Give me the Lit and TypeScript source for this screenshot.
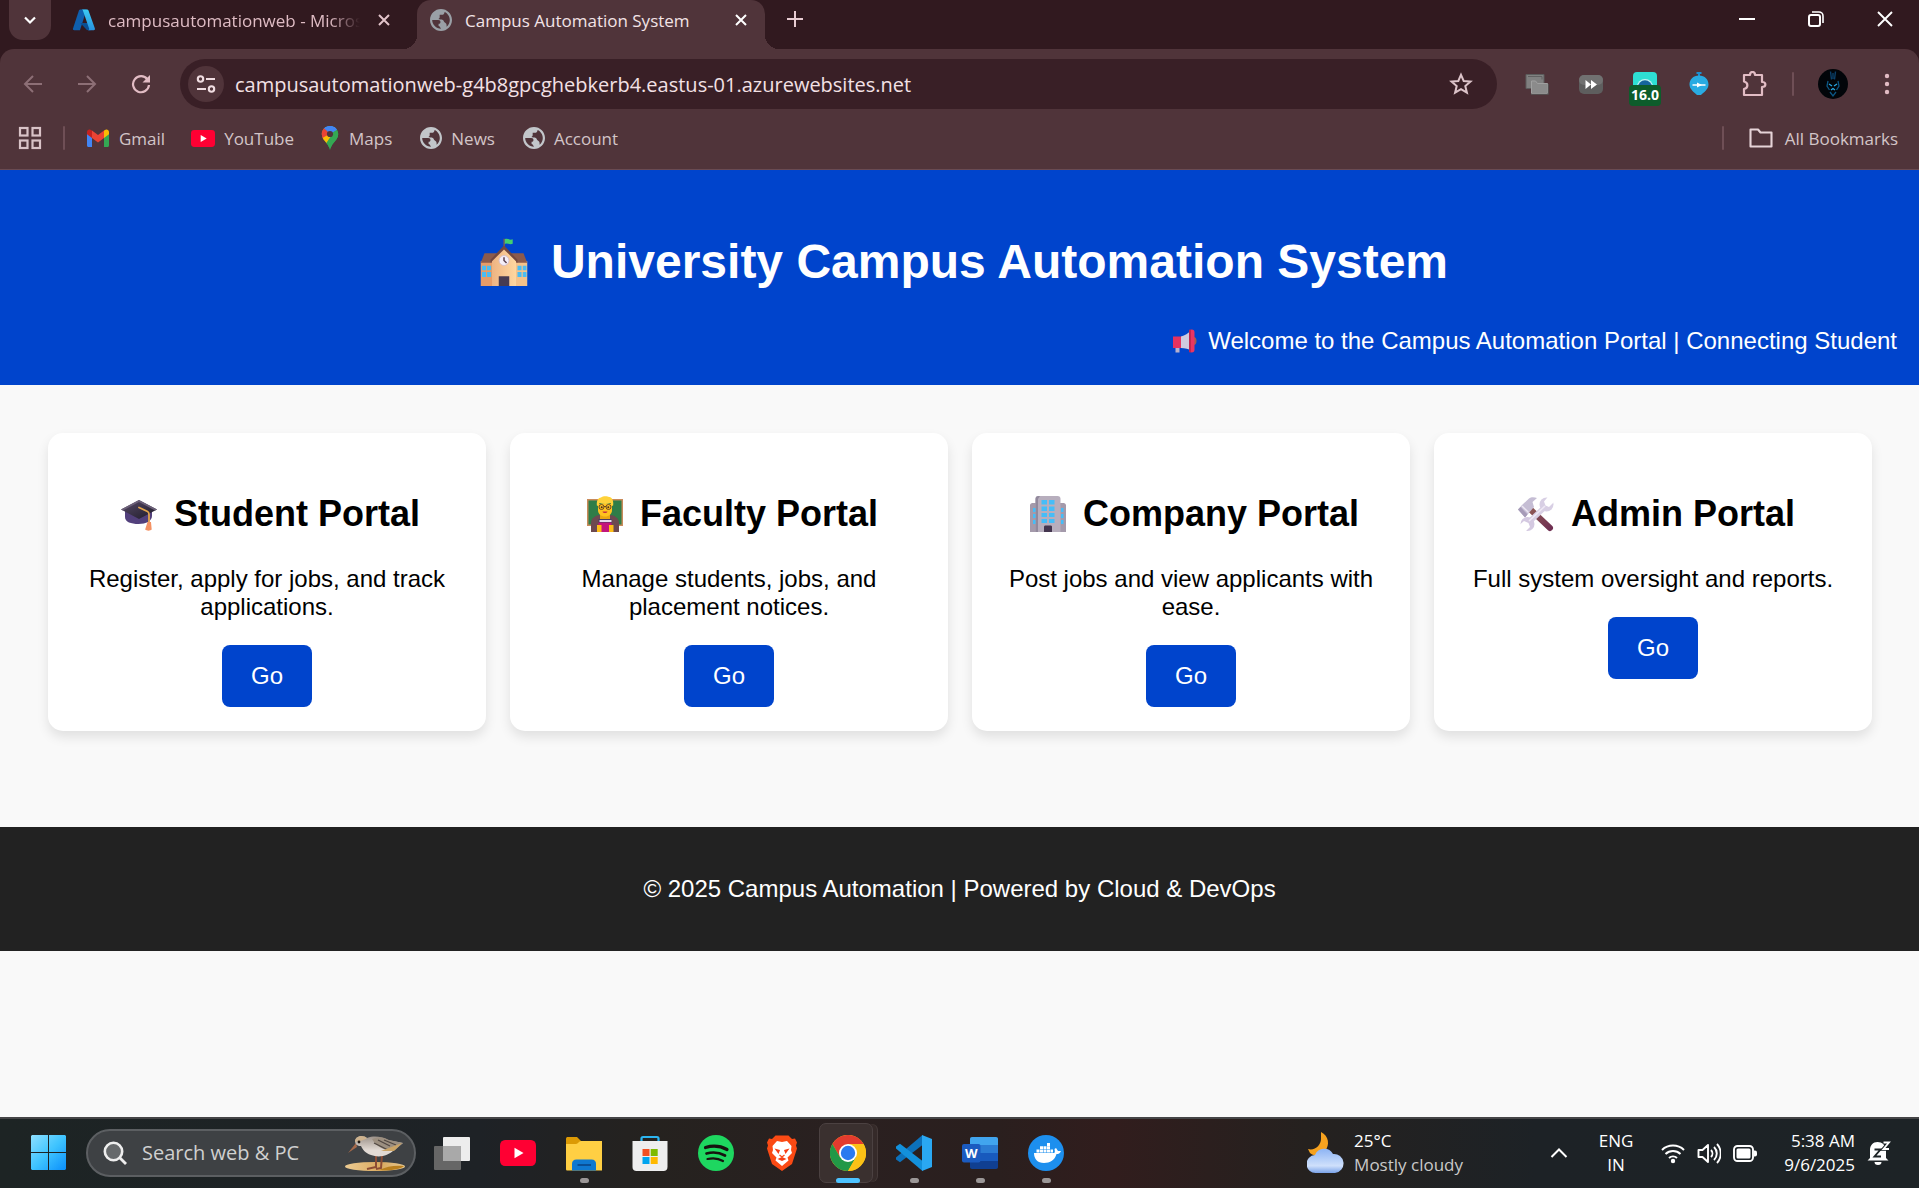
import { LitElement, html, svg, css } from "lit";
import { customElement } from "lit/decorators.js";

const icon = (size: number, box: number, body: unknown) =>
  html`<svg class="icon" width=${size} height=${size} viewBox="0 0 ${box} ${box}" aria-hidden="true">${body}</svg>`;

const globe = (fill: string) =>
  html`<svg class="icon" width="22" height="22" viewBox="2 2 20 20" aria-hidden="true">
    <path fill=${fill} fill-rule="evenodd" d="M12 2C6.480 2 2 6.480 2 12s4.480 10 10 10 10-4.480 10-10S17.520 2 12 2zm0 17.900c-4.300 0-8-3.600-8-7.900h5.500c1.500 0 2 .8 2 1.800 0 1.200-.7 1.700-1.700 1.700v2c.9.3 1.500 1 2.200 2.400zm5-1.700c1.900-1.500 3-3.700 3-6.200 0-3.300-2-6.100-4.700-7.300-.3 1.700-1.100 2.600-2.600 2.600h-1.900v2.200c0 .8-.5 1.300-1.300 1.500 1.300.4 3 .2 4.200 1 .9.600.8 1.700 1.800 2.200 1.300.6 1.900 2 1.500 4z" />
  </svg>`;

const azure = icon(
  24,
  24,
  svg`<defs><linearGradient id="az" x1="0" y1="0" x2="0" y2="1"><stop offset="0" stop-color="#3ccbf4"/><stop offset="1" stop-color="#2892df"/></linearGradient></defs>
  <path d="M8 1.500h6.600L8 22.300H2.200a1.300 1.300 0 0 1-1.200-1.700L7 2.300z" fill="#0f5fae"/>
  <path d="M18 15H8.300l6.600 6.900 3.500.6z" fill="#0a4f94"/>
  <path d="M9.600 1.500h5.600c.5 0 1 .3 1.200.8L22.900 20.600a1.300 1.300 0 0 1-1.200 1.700h-5.800c1 0 1.500-.8 1.200-1.700L10.800 2.300c-.2-.5-.6-.8-1.200-.8z" fill="url(#az)"/>`
);

const closeX = (color: string) =>
  icon(14, 14, svg`<path d="M2 2l10 10M12 2L2 12" stroke=${color} stroke-width="2" fill="none"/>`);

const gmail = icon(
  24,
  24,
  svg`<path d="M1 6v13.500c0 .8.700 1.500 1.500 1.500H6V10z" fill="#4285f4"/><path d="M18 10v11h3.500c.8 0 1.500-.7 1.500-1.500V6z" fill="#34a853"/>
  <path d="M18 4.500V12l5-3.800V6c0-2-2.200-3.200-3.800-2z" fill="#fbbc04"/><path d="M6 12V4.500l6 4.500 6-4.500V12l-6 4.500z" fill="#ea4335"/><path d="M1 6v2.200L6 12V4.500L4.800 4C3.200 2.800 1 4 1 6z" fill="#c5221f"/>`
);

const youtube = (w: number, h: number) =>
  html`<svg class="icon" width=${w} height=${h} viewBox="0 0 36 25" preserveAspectRatio="none" aria-hidden="true">
    <rect width="36" height="25" rx="5" fill="#ff0033" /><path d="M14.500 7.500v10l9-5z" fill="#fff" />
  </svg>`;

const maps = html`<svg class="icon" width="20" height="24" viewBox="2 0 20 24" aria-hidden="true">
  <clipPath id="pin"><path d="M12 0c4.700 0 8.200 3.600 8.200 8 0 6.500-6 7.500-8.200 16C9.800 15.500 3.800 14.500 3.800 8c0-4.400 3.500-8 8.200-8z" /></clipPath>
  <g clip-path="url(#pin)"><path d="M0 0h24v24H0z" fill="#34a853" /><path d="M5 2L12 8 22 2V0H5z" fill="#4285f4" /><path d="M12 8L20 0H6z" fill="#4285f4" /><path d="M5.500 2L12 8 4 16 0 8z" fill="#ea4335" /><path d="M3 13.500L12 5l3 5-8 9z" fill="#fbbc04" /><path d="M12 8L6 2.500 3 6v6.500z" fill="#ea4335" /><path d="M15 7l-8 12 9 5 6-12V3z" fill="#34a853" /><path d="M12 8l7-5-5-3-7 2z" fill="#4285f4" /></g>
  <circle cx="12" cy="8" r="3.100" fill="#50343a" />
</svg>`;

@customElement("browser-chrome")
class BrowserChrome extends LitElement {
  static styles = css`
    :host { display: block; background: #50343a; color: #e3d3d6; font-family: "Open Sans", "Noto Sans", sans-serif; border-bottom: 1px solid #6a4b52; }
    button { font: inherit; color: inherit; background: none; border: 0; padding: 0; display: grid; place-items: center; }
    a { color: inherit; text-decoration: none; }
    svg { display: block; flex: none; }
    .strip { height: 49px; background: #31191f; display: flex; align-items: flex-start; }
    .search-tabs { width: 42px; height: 40px; margin-left: 9px; border-radius: 0 0 14px 14px; background: #50343a; }
    .tab { height: 40px; display: flex; align-items: center; box-sizing: border-box; font-size: 17px; }
    .idle { width: 356px; margin-left: 10px; padding: 0 19px 0 11px; color: #dfbcc4; }
    .idle .label { margin: 0 10px 0 12px; }
    .fade { -webkit-mask-image: linear-gradient(90deg, #000 88%, transparent); }
    .label { flex: 1; overflow: hidden; white-space: nowrap; }
    .tab button { width: 28px; height: 28px; }
    .active { position: relative; width: 348px; height: 49px; padding: 0 10px 9px 13px; background: #50343a; border-radius: 14px 14px 0 0; color: #f3e3e6; }
    .active .label { margin-left: 13px; }
    .active::before, .active::after { content: ""; position: absolute; bottom: 0; width: 14px; height: 14px; }
    .active::before { left: -14px; background: radial-gradient(circle at 0 0, transparent 14px, #50343a 14px); }
    .active::after { right: -14px; background: radial-gradient(circle at 100% 0, transparent 14px, #50343a 14px); }
    .new-tab { width: 60px; height: 38px; }
    .window { display: flex; margin-left: auto; }
    .window button { width: 69px; height: 38px; }
    .corner { background: #31191f; }
    .toolbar { display: flex; align-items: center; height: 70px; padding: 0 5px 0 6px; background: #50343a; border-radius: 14px 14px 0 0; }
    .nav { width: 54px; height: 50px; }
    .address { flex: 1; height: 50px; margin-left: 12px; border-radius: 25px; background: #391f26; display: flex; align-items: center; padding: 0 24px 0 8px; }
    .site { width: 36px; height: 36px; border-radius: 50%; background: #50343a; }
    .url { flex: 1; min-width: 0; border: 0; outline: 0; background: none; color: #f3e1e5; font: inherit; font-size: 20px; padding: 0; margin: 0 12px 0 11px; }
    .tools { display: flex; margin-left: 13px; align-items: center; }
    .tools button { width: 54px; height: 50px; }
    .tools .extensions { width: 56px; }
    .badge-icon { position: relative; }
    .badge { position: absolute; left: 11px; top: 26px; width: 32px; height: 21px; border-radius: 4px; background: #0d5c2b; color: #fff; font-size: 14px; line-height: 20px; font-weight: 700; text-align: center; }
    .rule { width: 2px; height: 24px; border-radius: 1px; background: #6f4f56; }
    .tools .rule { margin: 0 12px 0 10px; }
    .bookmarks { display: flex; align-items: center; height: 38px; padding: 0 21px 12px 18px; font-size: 17px; color: #d3c5c8; }
    .bookmarks a { display: flex; align-items: center; gap: 9px; margin-right: 26px; }
    .bookmarks .spaced { margin-right: 28px; }
    .bookmarks > .rule { margin: 0 21px; }
    .bookmarks .right { display: flex; align-items: center; margin-left: auto; gap: 25px; }
    .bookmarks .right a { margin: 0; gap: 12px; }
  `;
  render() {
    const p = "#e2bcc4";
    return html`
      <div class="strip">
        <button class="search-tabs" aria-label="Search tabs">${icon(14, 14, svg`<path d="M2 4.500l5 5 5-5" fill="none" stroke="#fff" stroke-width="2.200"/>`)}</button>
        <div class="tab idle">${azure}<span class="label fade">campusautomationweb - Micros</span><button aria-label="Close tab">${closeX("#e3c4ca")}</button></div>
        <div class="tab active">${globe("#9aa0a6")}<span class="label">Campus Automation System</span><button aria-label="Close tab">${closeX("#fff")}</button></div>
        <button class="new-tab" aria-label="New tab">${icon(18, 18, svg`<path d="M9 1v16M1 9h16" stroke="#e8ccd2" stroke-width="2"/>`)}</button>
        <div class="window">
          <button aria-label="Minimize">${icon(16, 16, svg`<path d="M0 8h16" stroke="#fff" stroke-width="2"/>`)}</button>
          <button aria-label="Restore">${icon(16, 16, svg`<rect x="1" y="4" width="11" height="11" rx="2" fill="none" stroke="#fff" stroke-width="2"/><path d="M4 1h7a4 4 0 0 1 4 4v7" fill="none" stroke="#fff" stroke-width="1.600"/>`)}</button>
          <button aria-label="Close">${icon(16, 16, svg`<path d="M1 1l14 14M15 1L1 15" stroke="#fff" stroke-width="1.900"/>`)}</button>
        </div>
      </div>
      <div class="corner"><div class="toolbar">
        <button class="nav" aria-label="Back">${icon(20, 20, svg`<path d="M19 10H2M10 2l-8 8 8 8" fill="none" stroke="#8d6f76" stroke-width="2"/>`)}</button>
        <button class="nav" aria-label="Forward">${icon(20, 20, svg`<path d="M1 10h17M10 2l8 8-8 8" fill="none" stroke="#8d6f76" stroke-width="2"/>`)}</button>
        <button class="nav" aria-label="Reload">${icon(20, 20, svg`<path d="M16.500 5.500A8 8 0 1 0 18 11" fill="none" stroke=${p} stroke-width="2.200"/><path d="M19 1v7.500h-7.500z" fill=${p}/>`)}</button>
        <div class="address">
          <button class="site" aria-label="Site information">${icon(20, 20, svg`<g fill="none" stroke="#f0dde1" stroke-width="2.100"><circle cx="4.500" cy="5" r="2.700"/><path d="M10 5h9M1 15h9"/><circle cx="15.500" cy="15" r="2.700"/></g>`)}</button>
          <input class="url" type="text" aria-label="Address" value="campusautomationweb-g4b8gpcghebkerb4.eastus-01.azurewebsites.net" />
          <button aria-label="Bookmark this page">${icon(24, 24, svg`<path d="M12 2.800l2.700 6.200 6.800.6-5.200 4.500 1.600 6.600L12 17.200l-5.900 3.500 1.600-6.600L2.500 9.600l6.800-.6z" fill="none" stroke="#dcc3c9" stroke-width="2"/>`)}</button>
        </div>
        <div class="tools">
          <button aria-label="Windows extension">${icon(24, 24, svg`<path d="M1 2.500h18v14H1z" fill="#808080" stroke="#5c5c5c"/><path d="M3 4.500h14v3" fill="none" stroke="#606060"/><path d="M6.500 9h4l2 2.500h10v10h-16z" fill="#8b8b8b" stroke="#a0a0a0"/><path d="M6 22.300h17.300V12" fill="none" stroke="#555"/>`)}</button>
          <button aria-label="Video speed">${icon(24, 24, svg`<rect x="0" y="3" width="24" height="19" rx="5" fill="#5e5e5e"/><rect x="0" y="3" width="24" height="10" rx="5" fill="#717171"/><path d="M6.500 8v9l5.500-4.500zM12 8v9l6-4.500z" fill="#fff"/>`)}</button>
          <button class="badge-icon" aria-label="Screen recorder">${icon(24, 24, svg`<rect width="24" height="22" rx="4" fill="#2ee0d4"/><circle cx="12" cy="15" r="8" fill="#c9f3f3"/><circle cx="12" cy="15.500" r="7.200" fill="#16659d"/>`)}<span class="badge">16.0</span></button>
          <button aria-label="Timer">${icon(24, 24, svg`<path d="M9.500 1h5M12 1v3" stroke="#1a8fd1" stroke-width="2"/><path d="M12 3.500c6 0 9.500 4 9.500 9 0 5-5 8-7.500 10.500h-4C7.500 20.500 2.500 17.500 2.500 12.500c0-5 3.500-9 9.500-9z" fill="#29abe2"/><path d="M5.500 13h13" stroke="#fff" stroke-width="1.500"/><path d="M10 10.500l5 2.500-5 2.500z" fill="#fff"/>`)}</button>
          <button class="extensions" aria-label="Extensions">${icon(26, 26, svg`<path d="M3 4h6c0-4 5-4 5 0h7v7c4.500 0 4.500 5 0 5v8H3v-6c4.500-1 4.500-6.500 0-7.500z" fill="none" stroke=${p} stroke-width="2.200" stroke-linejoin="round"/>`)}</button>
          <span class="rule"></span>
          <button aria-label="Profile">${icon(30, 30, svg`<circle cx="15" cy="15" r="15" fill="#020509"/><path d="M12.500 2.500l1 8M17.500 2.500l-1 8M15 4v6" stroke="#0b3f68" stroke-width="1.400"/><path d="M10 12l-1 5 2.500 4M20 12l1 5-2.500 4M12 23l3 4 3-4" fill="none" stroke="#0c5684" stroke-width="1.300"/><path d="M11 15l3 2M19 15l-3 2M13 21l2-1.500 2 1.500" stroke="#27a5df" stroke-width="1.400" fill="none"/>`)}</button>
          <button aria-label="Menu">${icon(24, 24, svg`<g fill=${p}><circle cx="12" cy="4" r="2.200"/><circle cx="12" cy="12" r="2.200"/><circle cx="12" cy="20" r="2.200"/></g>`)}</button>
        </div>
      </div></div>
      <nav class="bookmarks">
        <button aria-label="Apps">${icon(24, 24, svg`<g fill="none" stroke="#d9c3c7" stroke-width="2.200"><rect x="2" y="2" width="7.500" height="7.500"/><rect x="14.500" y="2" width="7.500" height="7.500"/><rect x="2" y="14.500" width="7.500" height="7.500"/><rect x="14.500" y="14.500" width="7.500" height="7.500"/></g>`)}</button>
        <span class="rule"></span>
        <a href="#gmail">${gmail}Gmail</a>
        <a href="#youtube">${youtube(24, 17)}YouTube</a>
        <a href="#maps" class="spaced">${maps}Maps</a>
        <a href="#news" class="spaced">${globe("#c2c6ca")}News</a>
        <a href="#account">${globe("#c2c6ca")}Account</a>
        <div class="right"><span class="rule"></span>
          <a href="#all">${icon(24, 24, svg`<path d="M1.500 3.500h7.500l2.500 3h11v14h-21z" fill="none" stroke="#e6d3d7" stroke-width="2.100" stroke-linejoin="round"/>`)}All Bookmarks</a>
        </div>
      </nav>
    `;
  }
}

const school = icon(
  48,
  32,
  svg`<defs><linearGradient id="sw" x1="0" x2="1"><stop stop-color="#eeb483"/><stop offset="1" stop-color="#ffd7a0"/></linearGradient></defs>
  <path d="M15.600.5h1v6h-1z" fill="#7b5955"/><path d="M16.500.8c2-1 3 .9 5.300.1v3c-2 .9-3.500-.9-5.300.2z" fill="#43cf70"/>
  <path d="M.5 15.500h9V32h-9z" fill="#e79c68"/><path d="M22.500 15.500h9V32h-9z" fill="#f5c28a"/>
  <path d="M3 10.200h26l2.500 6.300H.5z" fill="#8b5a4c"/>
  <path d="M16 6l8 8.800V32H8V14.800z" fill="url(#sw)"/><path d="M16 5l9 9.500v2L16 7.600 7 16.500v-2z" fill="#74483f"/>
  <circle cx="16" cy="15" r="3.300" fill="#f4eef8" stroke="#cdb8cd" stroke-width=".500"/><path d="M16 12.800V15l1.700 1.700" stroke="#5c4250" fill="none"/>
  <path d="M12.500 25.500h7V32h-7z" fill="#473b52"/>
  <g fill="#4bbcf3"><path d="M1.300 18.500h2.700v3H1.300zM4.700 18.500h2.700v3H4.700zM1.300 22.700h2.700v3.300H1.300zM4.700 22.700h2.700v3.300H4.700zM25 18.500h2.700v3H25zM28.500 18.500h2.500v3h-2.500zM25 22.700h2.700v3.300H25zM28.500 22.700h2.500v3.300h-2.500z"/></g>`
);

const megaphone = icon(
  26,
  26,
  svg`<ellipse cx="21.500" cy="13" rx="3" ry="4" fill="#a45b4e"/><path d="M3.500 18h4v6.500h-4z" fill="#b8b0cc"/><path d="M1 8.500h9v11.500H1z" fill="#e6325f"/>
  <path d="M9 8.500c4-1 7-3 10-6v20c-2-1.500-6-2.500-10-2.500z" fill="#cfcade"/><rect x="17" y="1.500" width="5.500" height="23" rx="2.700" fill="#e93563"/><rect x="17" y="1.500" width="2" height="23" rx="1" fill="#c22650"/>`
);

const cap = icon(
  36,
  36,
  svg`<defs><linearGradient id="cp" x1="0" x2="1" y2="1"><stop stop-color="#584b68"/><stop offset="1" stop-color="#1d1a28"/></linearGradient></defs>
  <path d="M4 15v6c0 5 6 7 13.500 7S31 25 31 20v-5z" fill="#52407c"/><path d="M18 4l18 9.500L18 23 0 13.500z" fill="url(#cp)"/>
  <path d="M18 4l18 9.500-2 1L18 6 2 14.500l-2-1z" fill="#6c6078"/><path d="M18 11.500l8.500 4c1.300.6 1.500 2 1.500 3v9" fill="none" stroke="#e2a44c" stroke-width="1.800" stroke-linecap="round"/>
  <path d="M26.500 26h3.500l.7 7.500c-1.500 1.500-5 1.500-6.500 0z" fill="#f49163"/>`
);

const teacher = icon(
  36,
  36,
  svg`<path d="M0 3h36v27H0z" fill="#c98b5a"/><path d="M1.500 4.500h33v24h-33z" fill="#2f7d48"/>
  <path d="M4 36v-9c0-5 5-8 9-8h10c4 0 9 3 9 8v9z" fill="#6d4a50"/><path d="M13 17h10v6H13z" fill="#e9a811"/>
  <path d="M11 8h14v6c0 4-3 6.500-7 6.500S11 18 11 14z" fill="#ffc31f"/><path d="M10 10c-1-5 1-8 4-8.500 2-2 7-1.500 8-.500 3 0 5 4 4 9-1.500-.5-2-2-2.500-3-4 1.500-7.500 1-11 0-.5 1.500-1 2.500-2.500 3z" fill="#ffd23a"/>
  <g fill="none" stroke="#6b4722" stroke-width="1"><circle cx="14.500" cy="11" r="2.500"/><circle cx="21.500" cy="11" r="2.500"/><path d="M17 10.500h2"/></g><g fill="#4a2d20"><circle cx="14.700" cy="11.200" r="1"/><circle cx="21.300" cy="11.200" r="1"/></g><path d="M15.500 15.500h5c-.5 2-4.500 2-5 0z" fill="#c5313f"/>
  <path d="M11.500 23h13v4h-13z" fill="#473d63"/><path d="M12.500 24h12v2h-12z" fill="#e6dfed"/><path d="M11.500 26.500h13V36h-13z" fill="#c3167b"/><path d="M10 29h4.500v7H10zM22 29h4.500v7H22z" fill="#ffbd18"/>`
);

const office = icon(
  36,
  36,
  svg`<path d="M0 9.500C0 8 1 7 2.500 7H8v29H0zM28 7h5.500C35 7 36 8 36 9.500V36h-8z" fill="#a49aab"/>
  <path d="M5.500 3c0-2 1-3 3-3h19c2 0 3 1 3 3v33h-25z" fill="#b7aebd"/><path d="M5.500 3c0-2 1-3 3-3H10L8 3v33H5.500z" fill="#92899c"/>
  <g fill="#45bdf8"><path d="M11.500 4h5.500v4.500h-5.500zM19 4h5.500v4.500H19zM11.500 10.500h5.500V15h-5.500zM19 10.500h5.500V15H19zM11.500 17h5.500v4h-5.500zM19 17h5.500v4H19zM11.500 23h5.500v4h-5.500zM19 23h5.500v4H19zM3 12h2.500v4H3zM3 18h2.500v4H3zM3 24h2.500v4H3zM31 12h2.500v4H31zM31 18h2.500v4H31zM31 24h2.500v4H31z"/></g>
  <path d="M14 31c0-1 .5-1.500 1.500-1.500h5c1 0 1.500.5 1.500 1.500v5h-8z" fill="#43354e"/>`
);

const tools = icon(
  36,
  36,
  svg`<defs><linearGradient id="hd" x1="0" y1="0" x2="1" y2="1"><stop stop-color="#8d5654"/><stop offset="1" stop-color="#703052"/></linearGradient></defs>
  <path d="M13 14l19 18" stroke="url(#hd)" stroke-width="6" stroke-linecap="round"/>
  <path d="M0 13.500l4-4.500L11 2.500c2-1.500 5-1.500 8-.5l-4.500 4 1.500 5-6 7-3 3.500z" fill="#c5bdd4"/><path d="M0 13.500l2.500-2.500 7 7.500-2.500 3z" fill="#a69bb8"/><path d="M4 10l6.500 6.500" stroke="#ece6f2" stroke-width="1.500"/>
  <path d="M9 28L29 9" stroke="#d8cfe4" stroke-width="5.500"/>
  <circle cx="28.500" cy="8.500" r="7" fill="#d8cfe4"/><path d="M27.500 9.500l-1.500-4L31.500-1 37 5l-6 6z" fill="#fff"/>
  <circle cx="9.500" cy="28" r="7" fill="#d4c9e1"/><path d="M10.500 27l1.500 4L6 37-1 31l7-6z" fill="#fff"/>
  <path d="M11 25L27 10" stroke="#efe9f5" stroke-width="1.500"/>`
);

const portals = [
  { name: "Student Portal", art: cap, text: "Register, apply for jobs, and track applications." },
  { name: "Faculty Portal", art: teacher, text: "Manage students, jobs, and placement notices." },
  { name: "Company Portal", art: office, text: "Post jobs and view applicants with ease." },
  { name: "Admin Portal", art: tools, text: "Full system oversight and reports." },
];

@customElement("campus-page")
class CampusPage extends LitElement {
  static styles = css`
    :host { display: block; background: #f9f9f9; color: #000; font-family: "Liberation Sans", Arial, sans-serif; font-size: 24px; line-height: 28px; }
    svg { display: block; flex: none; }
    header { background: #0044cc; color: #fff; padding: 60px 22px 30px; }
    h1 { margin: 0; display: flex; justify-content: center; align-items: center; gap: 14px; font-size: 48px; line-height: 64px; }
    .art { display: grid; place-items: center; flex: none; width: 50px; }
    .wide { width: 66px; }
    .small { width: 33px; }
    .ticker { display: flex; justify-content: flex-end; align-items: center; gap: 7px; margin-top: 33px; white-space: nowrap; }
    main { display: grid; grid-template-columns: repeat(4, minmax(0, 1fr)); gap: 24px; padding: 48px 47px 48px 48px; margin-bottom: 48px; }
    .card { background: #fff; border-radius: 15px; padding: 57px 24px 24px; text-align: center; box-shadow: 0 6px 12px rgba(0, 0, 0, 0.1); }
    h2 { margin: 0; display: flex; justify-content: center; align-items: center; gap: 10px; font-size: 36px; line-height: 48px; white-space: nowrap; }
    p { margin: 27px 0 24px; }
    .go { display: inline-block; vertical-align: top; padding: 17px 29px; background: #0044cc; color: #fff; border-radius: 8px; text-decoration: none; }
    footer { background: #222; color: #fff; text-align: center; padding: 48px 24px; }
  `;
  render() {
    return html`
      <header>
        <h1><span class="art wide">${school}</span>University Campus Automation System</h1>
        <div class="ticker"><span class="art small">${megaphone}</span><span>Welcome to the Campus Automation Portal | Connecting Student</span></div>
      </header>
      <main>
        ${portals.map(
          (p) => html`<section class="card"><h2><span class="art">${p.art}</span>${p.name}</h2><p>${p.text}</p><a class="go" href="#portal">Go</a></section>`
        )}
      </main>
      <footer>© 2025 Campus Automation | Powered by Cloud &amp; DevOps</footer>
    `;
  }
}

const folder = svg`<path d="M0 4c0-1.500.7-2 2-2h9l4 4h19v8H0z" fill="#dc9a05"/><path d="M0 9h10c2 0 3-3 5-3h20.500c1 0 1.500.5 1.500 1.500V34c0 1-.5 1.500-1.500 1.500h-34C.5 35.500 0 35 0 34z" fill="#ffcf43"/><path d="M6 35.500V29c0-3 1.500-4.500 4.500-4.500h15c3 0 4.500 1.500 4.500 4.500v6.500z" fill="#0f78d0"/><path d="M11.500 30h13.500" stroke="#0a4f96" stroke-width="2"/>`;
const store = svg`<path d="M9.500 7V3.500c0-1 .5-1.500 1.500-1.500h14c1 0 1.500.5 1.500 1.500V7" fill="none" stroke="#2cb5f0" stroke-width="2.200"/><path d="M.5 6h35v26c0 2.500-1.500 4-4 4h-27c-2.500 0-4-1.500-4-4z" fill="#eeeeee"/><path d="M10.500 14h7v7h-7z" fill="#f25022"/><path d="M18.700 14h7v7h-7z" fill="#7fba00"/><path d="M10.500 22h7v7h-7z" fill="#00a4ef"/><path d="M18.700 22h7v7h-7z" fill="#ffb900"/>`;
const spotify = svg`<circle cx="18" cy="18" r="18" fill="#1ed760"/><g fill="none" stroke="#17130f" stroke-linecap="round"><path d="M7.500 12.500c7-2 15-1.500 21.500 2" stroke-width="3.200"/><path d="M8.500 18.500c6-1.700 13-1 18.500 2" stroke-width="2.700"/><path d="M9.500 24c5-1.200 11-.7 15.500 2" stroke-width="2.200"/></g>`;
const brave = svg`<path d="M8 4l3.500-3.500h13L28 4l3-.5 2 4-1 3 1 3-5 15.500-10 7-10-7-5-15.500 1-3-1-3 2-4z" fill="#fb4a14"/><path d="M18 7l5-1 4.500 5-.5 4 1 3-4.500 4.500 1 3L18 31l-6.500-5.500 1-3L8 18l1-3-.5-4 4.500-5z" fill="#fff"/><path d="M10.500 13.500l5.500 1.500-1.500 4zM25.500 13.500L20 15l1.500 4zM13.500 24l4.500-2 4.500 2-4.500 2z" fill="#f63d14"/><path d="M15.500 20l2.500 2 2.500-2" fill="none" stroke="#fb4a14" stroke-width="1.300"/>`;
const chrome = svg`<circle cx="18" cy="18" r="18" fill="#fbc116"/><path d="M18 9h15.600A18 18 0 0 0 2.400 9L10.200 22.500 18 18z" fill="#e33b2e"/><path d="M2.400 9l7.800 13.500L18 18l7.800 4.500L18 36A18 18 0 0 1 2.400 9z" fill="#229847"/><path d="M18 36l7.800-13.500L25 9h8.600A18 18 0 0 1 18 36z" fill="#fbc116"/><circle cx="18" cy="18" r="9" fill="#fff"/><circle cx="18" cy="18" r="7.200" fill="#2b7af0"/>`;
const vscode = svg`<path d="M26.500 0v10L4 27.300 0 24.500v-2z" fill="#0c71bb"/><path d="M0 11.500L4 8.700 26.500 26v10L0 13.500z" fill="#1391dc"/><path d="M26 0L36 4v28l-10 4z" fill="#2aa8f2"/>`;
const word = svg`<path d="M8 4c0-1.300.7-2 2-2h24c1.300 0 2 .7 2 2v6H8z" fill="#41a5ee"/><path d="M8 10h28v8H8z" fill="#2b7cd3"/><path d="M8 18h28v8H8z" fill="#185abd"/><path d="M8 26h28v6c0 1.300-.7 2-2 2H10c-1.300 0-2-.7-2-2z" fill="#103f91"/><rect x="0" y="9" width="18.500" height="18.500" rx="2" fill="#1b5bc0"/><text x="9.200" y="23" fill="#fff" font-family="Open Sans, sans-serif" font-weight="700" font-size="13" text-anchor="middle">W</text>`;
const docker = svg`<circle cx="18" cy="18" r="18" fill="#1d8fee"/><path d="M6 18h20c1 0 1-2 .5-4l1.500-1 2 3h3c-1 2.500-2.500 3-4.500 3C27 25 22 28 16 28 9.500 28 6 24 6 18z" fill="#fff"/><g fill="#fff"><path d="M8.500 14.500h3v3h-3zM12 14.500h3v3h-3zM15.500 14.500h3v3h-3zM19 14.500h3v3h-3zM22.500 14.500h2.500v3h-2.500zM12 11.300h3v2.800h-3zM15.500 11.300h3v2.800h-3zM19 11.300h3v2.800h-3zM19 8h3v2.900h-3z"/></g>`;

const apps = [
  { name: "YouTube", art: youtube(36, 26), state: "" },
  { name: "File Explorer", art: icon(36, 36, folder), state: "open" },
  { name: "Microsoft Store", art: icon(36, 36, store), state: "" },
  { name: "Spotify", art: icon(36, 36, spotify), state: "" },
  { name: "Brave", art: icon(36, 36, brave), state: "" },
  { name: "Chrome", art: icon(36, 36, chrome), state: "current" },
  { name: "VS Code", art: icon(36, 36, vscode), state: "open" },
  { name: "Word", art: icon(36, 36, word), state: "open" },
  { name: "Docker", art: icon(36, 36, docker), state: "open" },
];

@customElement("task-bar")
class TaskBar extends LitElement {
  static styles = css`
    :host { display: flex; align-items: center; box-sizing: border-box; height: 71px; padding: 0 28px 2px 30px; border-top: 2px solid #454547; color: #fff; font-family: "Open Sans", "Noto Sans", sans-serif; font-size: 17px; line-height: 24px;
      background: linear-gradient(90deg, #1d2424 0, #1e2226 25%, #25221f 34%, #2a2020 44%, #2a1f1e 52%, #311d1d 58%, #25211f 68%, #1d2226 80%, #1d2326 100%); }
    button { font: inherit; color: inherit; background: none; border: 0; padding: 0; }
    svg { display: block; flex: none; }
    .start { margin-right: 19px; }
    .search { display: flex; align-items: center; box-sizing: border-box; width: 330px; height: 48px; border-radius: 24px; border: 2px solid #5c5f62; background: #3e4144; padding: 0 9px 0 15px; gap: 15px; }
    .search input { flex: 1; min-width: 0; border: 0; outline: 0; padding: 0; background: none; font: inherit; font-size: 20px; color: #d6d6d6; }
    .search input::placeholder { color: #d0d0d0; opacity: 1; }
    .task-view { margin: 0 15px 0 18px; }
    .app { position: relative; width: 66px; height: 60px; display: grid; place-items: center; }
    .app svg { position: relative; }
    .current::before { content: ""; position: absolute; left: 4px; top: 0; right: 8px; bottom: 0; border: 1px solid #4b4141; border-radius: 7px; background: #3a302f; box-shadow: 5px 0 0 -1px #352a29, 6px 0 0 -1px #453a39; }
    .open::after, .current::after { content: ""; position: absolute; bottom: 0; left: 29px; width: 9px; height: 5px; border-radius: 3px; background: #9b9797; }
    .current::after { left: 21px; width: 24px; background: #4cc2ff; }
    .weather { display: flex; align-items: center; gap: 10px; margin-left: auto; margin-right: 87px; text-align: left; }
    .weather small { font-size: inherit; color: #c9c9c9; display: block; }
    .lang { width: 56px; text-align: center; margin: 0 17px 0 20px; }
    .status { display: flex; align-items: center; gap: 12px; }
    .clock { text-align: right; margin: 0 12px 0 20px; width: 78px; white-space: nowrap; }
  `;
  render() {
    return html`
      <button class="start" aria-label="Start">${icon(37, 37, svg`<defs><linearGradient id="wn" x1="0" y1="0" x2="1" y2="1"><stop stop-color="#8ee0ff"/><stop offset=".5" stop-color="#3fc4ff"/><stop offset="1" stop-color="#0a8ffb"/></linearGradient></defs><path d="M2 1h16v17H1V2zM19 1h16l1 1v16H19zM1 19h17v17H2l-1-1zM19 19h17v16l-1 1H19z" fill="url(#wn)"/>`)}</button>
      <label class="search">
        ${icon(24, 24, svg`<circle cx="10.500" cy="10.500" r="8.700" fill="#66696b" stroke="#eee" stroke-width="2.600"/><path d="M17 17l6 6" stroke="#eee" stroke-width="2.800"/>`)}
        <input type="text" aria-label="Search" placeholder="Search web &amp; PC" />
        <svg width="60" height="36" viewBox="0 0 60 36" aria-hidden="true">
          <defs><linearGradient id="sand" x1="0" x2="1"><stop stop-color="#eccb92" /><stop offset=".6" stop-color="#d9a95f" /><stop offset="1" stop-color="#e6c993" /></linearGradient>
          <linearGradient id="body" x1="0" y1="0" x2="0" y2="1"><stop stop-color="#9a9088" /><stop offset=".7" stop-color="#e2dad4" /></linearGradient></defs>
          <ellipse cx="30" cy="31.500" rx="30" ry="4.500" fill="url(#sand)" /><path d="M34 35c8-4 17-5 25-4-3 3-13 5-25 4z" fill="#b97f1e" />
          <path d="M31 21v11l-9 2M37 20l-1 13-5 1" fill="none" stroke="#8c4c34" stroke-width="2" />
          <path d="M11 8l1 4-9 6z" fill="#a5694a" />
          <path d="M10 6c1-6 9-6 12-3 8-3 15-1 21 2l15 3-9 7c-6 6-15 8-23 5-6-2-8-5-10-9-4 0-6-2-6-5z" fill="url(#body)" />
          <path d="M27 4c7-3 12-2 17 1l14 3-8 7c-8 1-17-1-23-11z" fill="#9c8f80" /><path d="M33 5l12 6M29 8l14 7M39 5l12 5" stroke="#514842" stroke-width="1.300" /><path d="M36 16l21-8-8 8z" fill="#cba466" />
          <path d="M10 6c1-6 9-6 12-3-3 3-7 2-12 4z" fill="#cdb28e" /><circle cx="14" cy="7" r="1.400" fill="#20180f" />
        </svg>
      </label>
      <button class="task-view" aria-label="Task view">${icon(36, 36, svg`<rect x="9" y="2" width="27" height="24" rx="1" fill="#ededed"/><rect x="0" y="11" width="27" height="24" rx="1" fill="#666"/><path d="M9 11h18v15H9z" fill="#a9a9a9"/>`)}</button>
      ${apps.map((a) => html`<button class="app ${a.state}" aria-label=${a.name}>${a.art}</button>`)}
      <button class="weather">
        <svg width="37" height="42" viewBox="0 0 37 42" aria-hidden="true"><defs><linearGradient id="cl" x1="0" y1="0" x2="0" y2="1"><stop stop-color="#8db4f4" /><stop offset=".7" stop-color="#cfe0fb" /><stop offset="1" stop-color="#7aa2e8" /></linearGradient></defs>
          <path d="M14 0c8 4 9 13 4 19-4 5-11 6-15 2L1 17c7 2 13-4 13-10 0-3 0-5 0-7z" fill="#f6a21f" />
          <path d="M9 41a9 9 0 0 1-1-18 10 10 0 0 1 18-1 9.500 9.500 0 0 1 2 19z" fill="url(#cl)" /></svg>
        <span>25°C<small>Mostly cloudy</small></span>
      </button>
      <button aria-label="Hidden icons">${icon(18, 18, svg`<path d="M1.500 13L9 5.500l7.500 7.500" fill="none" stroke="#fff" stroke-width="2"/>`)}</button>
      <button class="lang">ENG<br />IN</button>
      <button class="status" aria-label="Network, volume and battery">
        ${icon(24, 24, svg`<g fill="none" stroke="#fff" stroke-width="2"><path d="M1 9a16 16 0 0 1 22 0M4.500 13a11 11 0 0 1 15 0M8 17a6 6 0 0 1 8 0"/></g><circle cx="12" cy="20" r="2.200" fill="#fff"/>`)}
        ${icon(24, 24, svg`<path d="M1.500 9h4L11 4v17l-5.500-5h-4z" fill="none" stroke="#fff" stroke-width="1.900" stroke-linejoin="round"/><path d="M14 9a5 5 0 0 1 0 7M17 6a9 9 0 0 1 0 13M20 3a14 14 0 0 1 0 19" fill="none" stroke="#fff" stroke-width="1.900"/>`)}
        ${icon(24, 24, svg`<rect x="1" y="5" width="19" height="15" rx="3.500" fill="none" stroke="#fff" stroke-width="1.900"/><rect x="3.500" y="7.500" width="14" height="10" rx="1.500" fill="#fff"/><path d="M21 9.500h1a2 2 0 0 1 2 2v2a2 2 0 0 1-2 2h-1z" fill="#fff"/>`)}
      </button>
      <div class="clock">5:38 AM<br />9/6/2025</div>
      <button aria-label="Notifications">${icon(24, 24, svg`<path d="M3 17V9c0-4.500 3-8 7.500-8S19 4.500 19 9v8l2.500 2.500H.5z" fill="#fff"/><path d="M7.500 21h7a3.500 3 0 0 1-7 0z" fill="#fff"/><path d="M7.500 8.500h6l-6 7H14" fill="none" stroke="#1d2326" stroke-width="1.900"/><path d="M16.500 1.500H22l-5.500 6.500H22" fill="none" stroke="#1d2326" stroke-width="3.600"/><path d="M16.500 1.500H22l-5.500 6.500H22" fill="none" stroke="#fff" stroke-width="1.800"/>`)}</button>
    `;
  }
}

@customElement("app-root")
class AppRoot extends LitElement {
  static styles = css`
    :host { display: flex; flex-direction: column; min-height: 100vh; background: #f9f9f9; overflow: hidden; }
    .page { flex: 1; }
  `;
  render() {
    return html`<browser-chrome></browser-chrome><campus-page class="page"></campus-page><task-bar></task-bar>`;
  }
}
